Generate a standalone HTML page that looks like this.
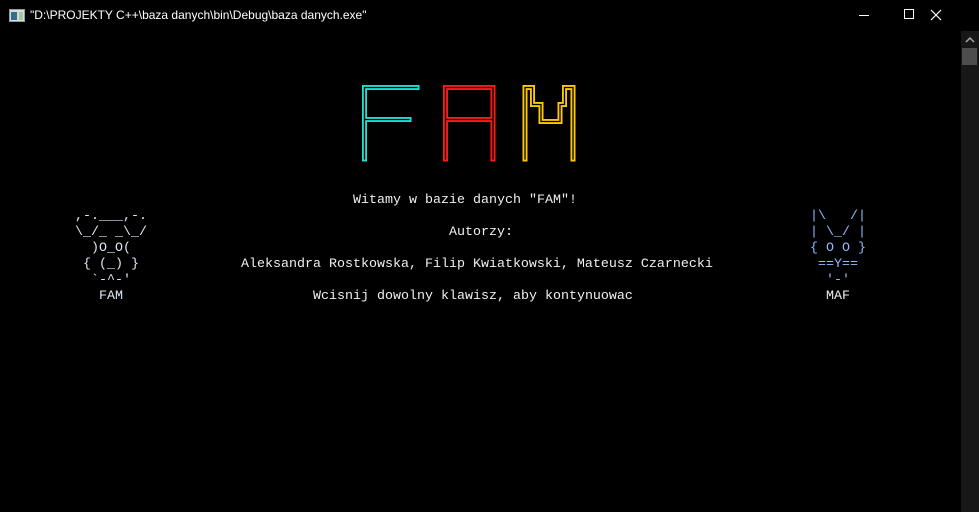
<!DOCTYPE html>
<html><head><meta charset="utf-8"><style>
html,body{margin:0;padding:0;background:#000;width:979px;height:512px;overflow:hidden;position:relative}
.t{position:absolute;font-family:"Liberation Mono",monospace;font-size:13.33px;line-height:16px;white-space:pre;color:#f0f0f0}
.a{color:#dfe9f5}.b{color:#8fbcff}
</style></head><body>
<div style="position:absolute;left:0;top:0;width:979px;height:31px;background:#000"></div>
<svg style="position:absolute;left:9px;top:9px" width="16" height="14"><rect x="0.5" y="0.5" width="15" height="12" fill="#dcdcdc" stroke="#999"/><rect x="2" y="3" width="6" height="8" fill="#2f6f8f"/><rect x="10" y="3" width="4" height="8" fill="#a0c8a0"/></svg>
<div style="position:absolute;left:30px;top:8px;font-family:'Liberation Sans',sans-serif;font-size:12px;color:#fff">"D:\PROJEKTY C++\baza danych\bin\Debug\baza danych.exe"</div>
<div style="position:absolute;left:859px;top:15px;width:10px;height:1px;background:#fff"></div>
<div style="position:absolute;left:904px;top:9px;width:8px;height:8px;border:1px solid #fff"></div>
<svg style="position:absolute;left:930px;top:9px" width="12" height="12"><path d="M1 1L11 11M11 1L1 11" stroke="#fff" stroke-width="1.2"/></svg>
<div style="position:absolute;left:961px;top:31px;width:18px;height:481px;background:#171717"></div>
<svg style="position:absolute;left:964px;top:36px" width="12" height="8"><path d="M2 6L6 2L10 6" stroke="#aaa" stroke-width="1.5" fill="none"/></svg>
<div style="position:absolute;left:962px;top:48px;width:15px;height:17px;background:#4d4d4d"></div>

<svg style="position:absolute;left:0;top:0" width="979" height="200">
<g fill="none" stroke-linecap="square">
<path d="M364.5 159V87.5H417M364.5 119.5H409" stroke="#1ee0d0" stroke-width="5"/>
<path d="M364.5 159V87.5H417M364.5 119.5H409" stroke="#000" stroke-width="1.3"/>
<path d="M445.5 159V87.5H493V159M445.5 119.5H493" stroke="#ff1a1a" stroke-width="5"/>
<path d="M445.5 159V87.5H493V159M445.5 119.5H493" stroke="#000" stroke-width="1.3"/>
<path d="M525 159V87.5H532.5V104.5H541V121.5H560V104.5H564.5V87.5H573V159" stroke="#ffc800" stroke-width="5"/>
<path d="M525 159V87.5H532.5V104.5H541V121.5H560V104.5H564.5V87.5H573V159" stroke="#000" stroke-width="1.3"/>
</g></svg>

<div class="t" style="left:353px;top:193px">Witamy w bazie danych "FAM"!</div>
<div class="t" style="left:449px;top:225px">Autorzy:</div>
<div class="t" style="left:241px;top:257px">Aleksandra Rostkowska, Filip Kwiatkowski, Mateusz Czarnecki</div>
<div class="t" style="left:313px;top:289px">Wcisnij dowolny klawisz, aby kontynuowac</div>

<div class="t a" style="left:67px;top:209px"> ,-.___,-.
 \_/_ _\_/
   )O_O(
  { (_) }
   `-^-'
    FAM</div>
<div class="t b" style="left:810px;top:209px">|\   /|
| \_/ |
{ O O }
 ==Y==
  '-'</div>
<div class="t" style="left:826px;top:289px">MAF</div>
</body></html>
